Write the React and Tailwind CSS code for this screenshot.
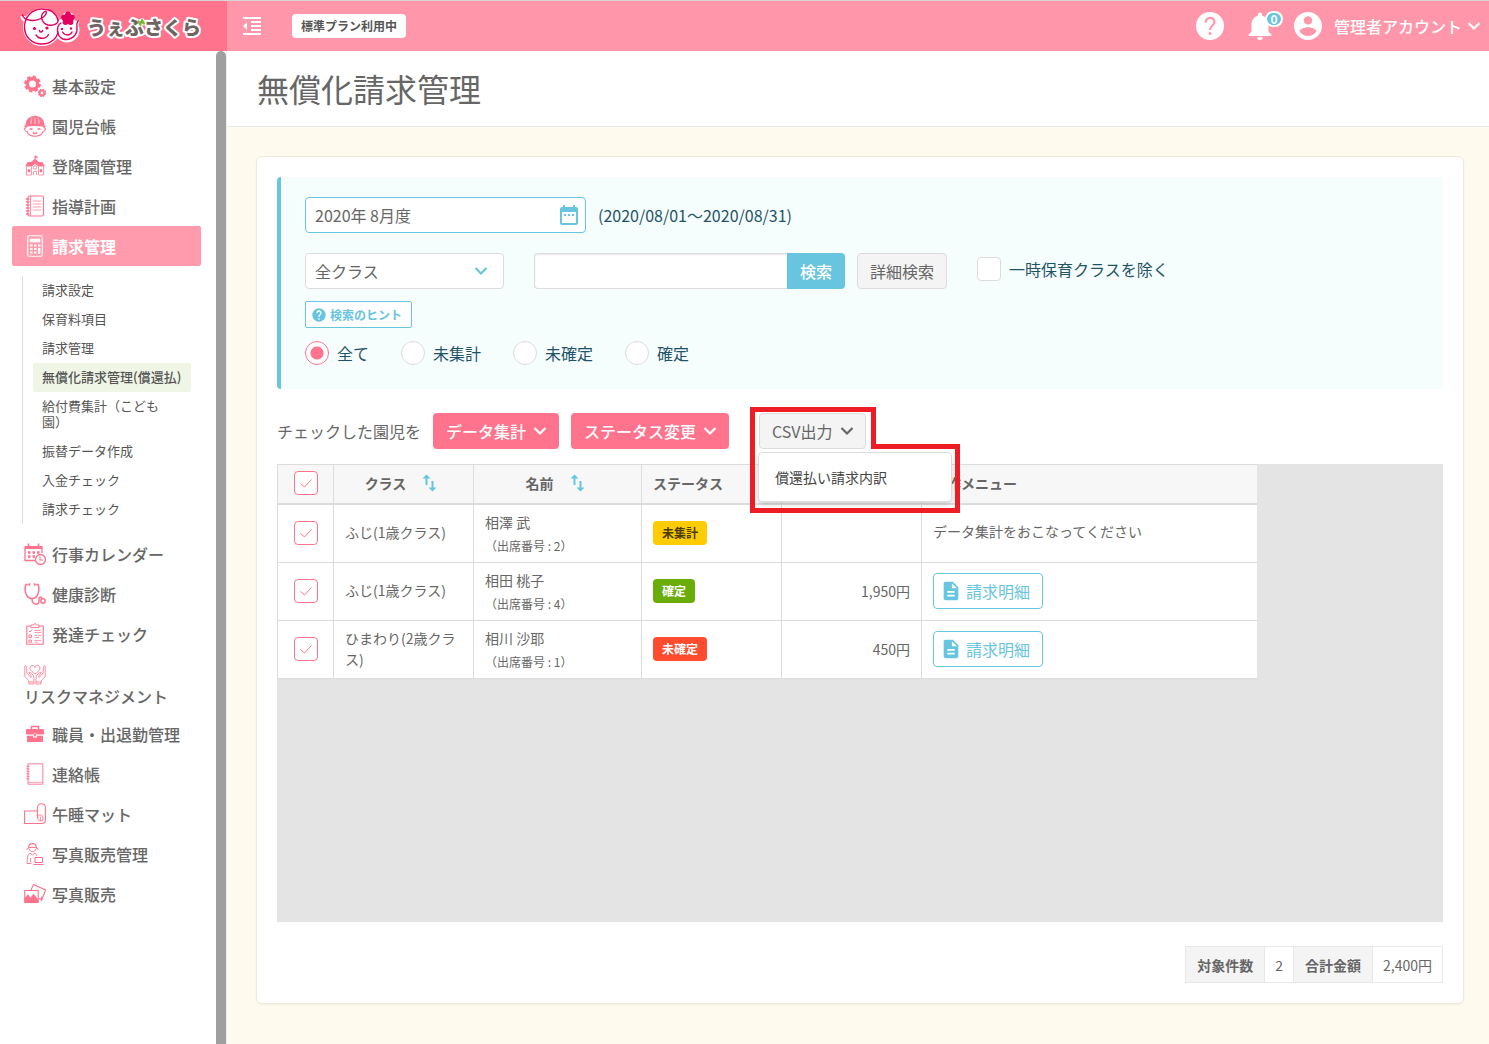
// App.jsx - 無償化請求管理
import React, { useState } from 'react';
import {
  MdDescription,
  MdFormatIndentDecrease,
  MdHelp,
  MdNotifications
} from 'react-icons/md';

const Chevron = ({ className = '' }) => (
  <svg className={`w-3.5 h-3.5 shrink-0 ${className}`} viewBox="0 0 14 14" fill="none" stroke="currentColor" strokeWidth="2.2" aria-hidden="true">
    <path d="M1.5 4 L7 9.5 L12.5 4" />
  </svg>
);

const icons = {
  gears: (
    <>
      <circle cx="8.5" cy="9" r="5.2" strokeWidth="3.4" />
      <circle cx="8.5" cy="9" r="7.2" strokeWidth="2.4" strokeDasharray="3.4 2.25" />
      <circle cx="18" cy="18" r="2.4" strokeWidth="2" />
      <circle cx="18" cy="18" r="3.6" strokeWidth="1.2" strokeDasharray="1.6 1.23" />
    </>
  ),
  child: (
    <>
      <path d="M2 10 C2 4.5 6 1.5 11 1.5 S20 4.5 20 10 Z" fill="currentColor" />
      <path d="M0.5 11.5 C6 9.5 16 9.5 21.5 11.5" strokeWidth="1.8" />
      <path d="M11 0.5 V2 M2.5 12.5 C-0.5 12.5 0.5 16.5 3 16.5 C5 22.8 17 22.8 19 16.5 C21.5 16.5 22.5 12.5 19.5 12.5" />
      <path d="M5.5 14 H8.5 M13.5 14 H16.5 M9 17.5 C10 19 12 19 13 17.5" strokeWidth="1.4" />
      <path d="M8 3 C7 5 7 7 7 9 M14 3 C15 5 15 7 15 9 M11 2.5 V9" stroke="#fff" strokeWidth="0.7" />
    </>
  ),
  school: (
    <>
      <path d="M2 11 L4 7.5 H7.5 L11 4.5 L14.5 7.5 H18 L20 11 H14.5 L11 8 L7.5 11 Z" fill="currentColor" />
      <path d="M11 5 V0.8 L13.5 2 L11 3" fill="currentColor" strokeWidth="0.9" />
      <path d="M2.5 11.5 V20 H7.5 M19.5 11.5 V20 H14.5 M7.5 11.5 V20 M14.5 11.5 V20 M9.5 20 V16.5 H12.5 V20" strokeWidth="0.7" />
      <circle cx="11" cy="12.5" r="1.7" strokeWidth="0.8" />
      <path d="M4 14.5 H6 V17 H4 Z M16 14.5 H18 V17 H16 Z" fill="currentColor" strokeWidth="0.5" />
    </>
  ),
  notebook: (
    <>
      <rect x="4" y="1" width="15.5" height="20" rx="1.5" />
      <path d="M6.5 1 V21" strokeWidth="0.8" />
      <path d="M2 4 H5.5 M2 7 H5.5 M2 10 H5.5 M2 13 H5.5 M2 16 H5.5 M2 19 H5.5" strokeWidth="1.4" />
      <path d="M9 6 H17 M9 9 H17 M9 12 H17 M9 15 H17" strokeWidth="0.7" />
    </>
  ),
  calculator: (
    <>
      <rect x="3.7" y="0.8" width="14.6" height="20.4" rx="1.5" />
      <path d="M6 4 H16 V7 H6 Z" fill="currentColor" strokeWidth="0.6" />
      <path d="M6 10.5 H8.5 M10 10.5 H12.5 M14 10.5 H16.5 M6 14 H8.5 M10 14 H12.5 M6 17.5 H8.5 M10 17.5 H12.5" strokeWidth="2.2" />
      <path d="M15.2 13 V18.6" strokeWidth="2.4" />
    </>
  ),
  calendar: (
    <>
      <path d="M11 17.5 H1 V4 H18 V10" strokeWidth="1.3" />
      <path d="M1 4.5 H18" strokeWidth="3" />
      <path d="M4.5 0.5 V4 M14.5 0.5 V4" strokeWidth="1.6" />
      <path d="M4 9.5 H6.5 M8.5 9.5 H11 M13 9.5 H15.5 M4 13.5 H6.5 M8.5 13.5 H11" strokeWidth="2.6" />
      <circle cx="16.5" cy="16.5" r="5" fill="#fff" strokeWidth="1.3" />
      <path d="M16 13.5 V17 H19" />
    </>
  ),
  stethoscope: (
    <>
      <path d="M4.5 1.5 H2 C0 6 1.5 15.5 8 15.5 S16 6 14 1.5 H11.5" strokeWidth="1.5" />
      <path d="M5.5 0.3 V2.7 M10.5 0.3 V2.7" strokeWidth="1.5" />
      <path d="M8 15.5 C8 23 15.5 22.5 15 17.5 C14.5 13.5 17.5 13 18 16" strokeWidth="1.5" />
      <circle cx="19" cy="18" r="2.2" strokeWidth="1.5" />
    </>
  ),
  clipboard: (
    <>
      <path d="M7 3 H2.8 V21.2 H19.2 V3 H15" />
      <path d="M7 4.5 V2 H9.5 C9.5 0.3 12.5 0.3 12.5 2 H15 V4.5 Z" strokeWidth="0.9" />
      <path d="M5 8 L6 9 L8 6.5 M5 12 H7.5 V14.5 H5 Z M5 17 H7.5 V19.2 H5 Z" strokeWidth="0.9" />
      <path d="M10.5 7.5 H17 M10.5 9.5 H17 M10.5 12.5 H13 M14 12.5 H17 M10.5 14.5 H15 M10.5 17.5 H17 M10.5 19.2 H14" strokeWidth="0.7" />
    </>
  ),
  hands: (
    <>
      <path d="M11 10 C6 6.5 5.5 4.5 6.5 2.5 C8 0.5 10.5 1.5 11 3.5 C11.5 1.5 14 0.5 15.5 2.5 C16.5 4.5 16 6.5 11 10 Z" strokeWidth="0.9" />
      <path d="M0.8 2 C2.5 1 2.8 3 2.8 9 L7 13.5 C8 12.5 6.5 11 4.8 8.5 C6.5 7.5 10 11.5 10 14 V20 H5 V17 L0.8 12.5 Z M4.5 18 H10" strokeWidth="0.8" />
      <path d="M21.2 2 C19.5 1 19.2 3 19.2 9 L15 13.5 C14 12.5 15.5 11 17.2 8.5 C15.5 7.5 12 11.5 12 14 V20 H17 V17 L21.2 12.5 Z M12 18 H17.5" strokeWidth="0.8" />
    </>
  ),
  briefcase: (
    <>
      <path d="M7.5 6 V3.5 H14.5 V6" strokeWidth="1.6" />
      <rect x="2" y="6" width="18" height="5.5" rx="1.2" fill="currentColor" stroke="none" />
      <path d="M3 12.8 H9 V14.5 H13 V12.8 H19 V19 H3 Z" fill="currentColor" stroke="none" />
      <rect x="9.8" y="10.8" width="2.4" height="2.6" fill="currentColor" stroke="#fff" strokeWidth="0.5" />
    </>
  ),
  ringNote: (
    <>
      <path d="M4 0.8 H18.8 V21.2 H4 Z" strokeWidth="0.9" />
      <path d="M4 19.3 H18.8" strokeWidth="0.7" />
      <path d="M2.5 3 L5.5 3.8 M2.5 5.5 L5.5 6.3 M2.5 8 L5.5 8.8 M2.5 10.5 L5.5 11.3 M2.5 13 L5.5 13.8 M2.5 15.5 L5.5 16.3" />
    </>
  ),
  mat: (
    <>
      <path d="M13.5 8 H0.6 V20.5 H18" />
      <path d="M13.5 15 V4.5 C13.5 -0.5 21.4 -0.5 21.4 4.5 V17 C21.4 19.5 20 20.5 18 20.5" />
      <path d="M13.5 15 C13.5 10.8 18.8 11 18.8 14.5 V17.5 C17 18.5 13.5 17.5 13.5 15 Z M16.3 13.5 V17.8" strokeWidth="0.9" />
    </>
  ),
  photographer: (
    <>
      <path d="M4.5 5.5 C4.5 -1 12.5 -1 12.5 5.5 M2.5 6.5 C5 3.5 12 3.5 14.5 6.5" />
      <path d="M5.5 6 C5.5 9.5 11.5 9.5 11.5 6" strokeWidth="0.9" />
      <path d="M7.5 20.5 H3 C3.5 15 3.5 11.5 6 10 L8.5 12 L11 10 C12.5 11 12.5 12 13 13 M6.5 19 V15" strokeWidth="0.9" />
      <path d="M11 14.5 H18.5 V19.5 H11 Z M9.5 21.5 H19.5" strokeWidth="1" />
    </>
  ),
  photos: (
    <>
      <path d="M7 7 L9.5 1.5 L21.5 7 L18 16.5 L14.5 15.5" />
      <rect x="0.7" y="7.5" width="13.5" height="12" />
      <path d="M1 19 V15 L4 11.5 L6.5 15 L9.5 11 L14 16.5 V19 Z" fill="currentColor" strokeWidth="0.5" />
      <path d="M17.5 13.5 V18" />
    </>
  )
};

const NavIcon = ({ name }) => (
  <svg className="w-[22px] h-[22px] shrink-0" viewBox="0 0 22 22" fill="none" stroke="currentColor" strokeWidth="1.1" aria-hidden="true">
    {icons[name]}
  </svg>
);

const navTop = [
  { icon: 'gears', label: '基本設定' },
  { icon: 'child', label: '園児台帳' },
  { icon: 'school', label: '登降園管理' },
  { icon: 'notebook', label: '指導計画' },
  { icon: 'calculator', label: '請求管理', active: true }
];

const navSub = [
  { label: '請求設定' },
  { label: '保育料項目' },
  { label: '請求管理' },
  { label: '無償化請求管理(償還払)', active: true },
  { label: '給付費集計（こども園）' },
  { label: '振替データ作成' },
  { label: '入金チェック' },
  { label: '請求チェック' }
];

const navBottom = [
  { icon: 'calendar', label: '行事カレンダー' },
  { icon: 'stethoscope', label: '健康診断' },
  { icon: 'clipboard', label: '発達チェック' },
  { icon: 'hands', label: 'リスクマネジメント', stacked: true },
  { icon: 'briefcase', label: '職員・出退勤管理' },
  { icon: 'ringNote', label: '連絡帳' },
  { icon: 'mat', label: '午睡マット' },
  { icon: 'photographer', label: '写真販売管理' },
  { icon: 'photos', label: '写真販売' }
];

const rows = [
  { id: 1, className: 'ふじ(1歳クラス)', name: '相澤 武', no: 2, status: '未集計', amount: '' },
  { id: 2, className: 'ふじ(1歳クラス)', name: '相田 桃子', no: 4, status: '確定', amount: '1,950円' },
  { id: 3, className: 'ひまわり(2歳クラス)', name: '相川 沙耶', no: 1, status: '未確定', amount: '450円' }
];

const statusStyles = {
  未集計: 'bg-[#ffcc00] text-[#4a3c00]',
  確定: 'bg-[#6aad0b] text-white',
  未確定: 'bg-[#ff4b2e] text-white'
};

const NavItem = ({ item }) => {
  if (item.stacked) {
    return (
      <a href="#" className="flex flex-col px-3 pt-2.5 h-[60px] text-[#ff738c]">
        <NavIcon name={item.icon} />
        <span className="leading-5 font-medium text-[#666]">{item.label}</span>
      </a>
    );
  }
  return (
    <a
      href="#"
      className={`flex items-center gap-1.5 h-10 px-3 rounded-xs ${item.active ? 'bg-[#ff9bad] text-white' : 'text-[#ff738c]'}`}
    >
      <NavIcon name={item.icon} />
      <span className={item.active ? 'font-bold' : 'font-medium text-[#666]'}>{item.label}</span>
    </a>
  );
};

const Logo = () => (
  <svg className="w-[190px] h-[46px]" viewBox="0 0 190 46" role="img" aria-label="うぇぶさくら">
    <g stroke="#fff" strokeWidth="5" fill="#fff" strokeLinejoin="round">
      <circle cx="22" cy="24" r="16.5" />
      <circle cx="47" cy="27" r="10" />
      <path d="M3 13 C3 17 8 19 14 17" />
      <circle cx="48" cy="16" r="4.5" />
      <path d="M57 18 L55 24" />
    </g>
    <g stroke="#e5005f" strokeWidth="1.4" fill="none" strokeLinecap="round">
      <path d="M38 17 C36 10 30 6 22 6 C12 6 4.5 14 4.5 24 C4.5 34 12 41 22 41 C31 41 37 35 38 29" />
      <path d="M2.5 12 C4 18 15 19 22 15 C28 11 27 7 24 9 C20 12 21 20 28 22 C35 23 39 20 38 16" />
      <path d="M41 20 C36 23 36 33 43 36 C50 38 57 33 57 26 C57 22 56 21 58 18" />
      <path d="M16 32 C19 36.5 26 36.5 28.5 31.5 M19.5 27.5 C19.5 29.5 22.5 29.5 22.5 27.5" />
      <path d="M42.5 29 C45 33 50 33 52 29" />
    </g>
    <g fill="#e5005f">
      <circle cx="14.5" cy="25.5" r="1.6" />
      <circle cx="27" cy="25" r="1.6" />
      <circle cx="42" cy="26" r="1.2" />
      <circle cx="51" cy="25.5" r="1.2" />
      <circle cx="48" cy="11.5" r="2.9" />
      <circle cx="52" cy="14.5" r="2.9" />
      <circle cx="50.5" cy="19" r="2.9" />
      <circle cx="45.5" cy="19" r="2.9" />
      <circle cx="44" cy="14.5" r="2.9" />
      <circle cx="48" cy="16" r="2.5" />
    </g>
    <text
      x="67"
      y="32"
      fontSize="19"
      fontWeight="900"
      fill="#6f6462"
      stroke="#fff"
      strokeWidth="4"
      strokeLinejoin="round"
      paintOrder="stroke"
    >
      うぇぶさくら
    </text>
    <path d="M118.5 18.5 L120.5 22 M122 17 L124 20.5" stroke="#7cc623" strokeWidth="2.2" strokeLinecap="round" />
  </svg>
);

const Header = () => (
  <header className="flex h-[51px] border-t border-[#d9d3d5] bg-[#ff96a9] text-white">
    <a href="#" className="flex items-center w-[227px] shrink-0 pl-5 bg-[#ff738c]">
      <Logo />
    </a>
    <div className="flex flex-1 items-center pl-[13px] pr-2">
      <button type="button" aria-label="メニューを閉じる">
        <MdFormatIndentDecrease size={24} />
      </button>
      <span className="ml-7 px-[9px] h-6 leading-6 rounded-sm bg-white text-xs font-bold text-[#555]">
        標準プラン利用中
      </span>
      <div className="flex items-center ml-auto">
        <button type="button" aria-label="ヘルプ">
          <svg className="w-7 h-7" viewBox="0 0 28 28" aria-hidden="true">
            <circle cx="14" cy="14" r="14" fill="#fff" />
            <path d="M9.7 10.5 C9.7 4.5 18.5 4.5 18.5 10 C18.5 13.5 14 13.7 14 18" fill="none" stroke="#ff96a9" strokeWidth="2.2" />
            <circle cx="14" cy="21.5" r="1.5" fill="#ff96a9" />
          </svg>
        </button>
        <button type="button" aria-label="お知らせ" className="relative ml-[19px]">
          <MdNotifications size={34} />
          <span className="absolute -right-1.5 top-0.5 w-[18px] h-4 rounded-full border-2 border-white bg-[#68c5df] text-xs leading-3 font-bold">
            0
          </span>
        </button>
        <button type="button" className="flex items-center ml-[17px]">
          <svg className="w-7 h-7" viewBox="2 2 20 20" fill="currentColor" aria-hidden="true">
            <path d="M12 2C6.48 2 2 6.48 2 12s4.48 10 10 10 10-4.48 10-10S17.52 2 12 2zm0 3c1.66 0 3 1.34 3 3s-1.34 3-3 3-3-1.34-3-3 1.34-3 3-3zm0 14.2c-2.5 0-4.71-1.28-6-3.22.03-1.99 4-3.08 6-3.08 1.99 0 5.97 1.09 6 3.08-1.29 1.94-3.5 3.22-6 3.22z" />
          </svg>
          <span className="ml-3 mr-[5px] font-medium">管理者アカウント</span>
          <Chevron />
        </button>
      </div>
    </div>
  </header>
);

const Sidebar = () => (
  <aside className="flex w-[227px] shrink-0 border-r border-[#eee] bg-white">
    <nav className="flex-1 min-w-0 pl-3 pr-[15px] pt-[15px] pb-8">
      {navTop.map(item => <NavItem key={item.label} item={item} />)}
      <ul className="my-2.5 ml-2.5 pl-2.5 pr-2.5 border-l border-[#ddd]">
        {navSub.map(item => (
          <li key={item.label}>
            <a
              href="#"
              className={`block pl-[9px] pt-1.5 pb-[7px] text-[13px] leading-4 rounded-xs text-[#555] ${item.active ? 'pr-2 bg-[#eff6e6] font-medium' : 'pr-5'}`}
            >
              {item.label}
            </a>
          </li>
        ))}
      </ul>
      {navBottom.map(item => <NavItem key={item.label} item={item} />)}
    </nav>
    <div className="w-2.5 shrink-0 rounded-t-full bg-[#9f9f9f]" />
  </aside>
);

const RadioItem = ({ label, value, current, onChange }) => (
  <label className="flex items-center gap-2">
    <input
      type="radio"
      name="status"
      value={value}
      checked={current === value}
      onChange={() => onChange(value)}
      className="appearance-none w-6 h-6 rounded-full border border-[#dcdcdc] bg-white checked:border-[#ff738c] checked:bg-[radial-gradient(circle,#ff738c_6px,#fff_7px)]"
    />
    {label}
  </label>
);

const PinkCheckbox = ({ label, checked, onChange }) => (
  <label className="inline-grid align-middle place-items-center">
    <input
      type="checkbox"
      aria-label={label}
      checked={checked}
      onChange={onChange}
      className="appearance-none col-start-1 row-start-1 w-6 h-6 rounded-sm border border-[#ff738c] bg-white"
    />
    {checked && (
      <svg className="col-start-1 row-start-1 w-3 h-3 pointer-events-none" viewBox="0 0 12 12" fill="none" stroke="#ff738c" aria-hidden="true">
        <path d="M0.5 6.5 L4.5 10 L11.5 2.5" />
      </svg>
    )}
  </label>
);

const SortIcon = () => (
  <svg className="w-4 h-[18px]" viewBox="0 0 16 18" fill="none" stroke="#68c5df" strokeWidth="2" aria-hidden="true">
    <path d="M4.5 11 V3 M10.5 7 V15" />
    <path d="M0.5 4.5 L4.5 0.5 L8.5 4.5 Z M6.5 13.5 L10.5 17.5 L14.5 13.5 Z" fill="#68c5df" stroke="none" />
  </svg>
);

const FilterPanel = () => {
  const [status, setStatus] = useState('all');

  return (
    <form className="rounded-sm border-l-4 border-[#68c5df] bg-[#f6fdfd] px-6 pt-5 pb-6 text-[#1f5466]">
      <div className="flex items-center gap-3">
        <div className="grid w-[281px] items-center">
          <input
            type="text"
            aria-label="対象年月"
            defaultValue="2020年 8月度"
            className="col-start-1 row-start-1 w-full h-9 px-[9px] rounded-sm border border-[#68c5df] bg-white text-[#666]"
          />
          <svg className="col-start-1 row-start-1 justify-self-end mr-2 w-[18px] h-5 pointer-events-none" viewBox="0 0 18 20" fill="#68c5df" aria-hidden="true">
            <path d="M2 2 H3 V0 H5 V2 H13 V0 H15 V2 H16 Q18 2 18 4 V18 Q18 20 16 20 H2 Q0 20 0 18 V4 Q0 2 2 2 Z M2 7 V18 H16 V7 Z" fillRule="evenodd" />
            <path d="M4 9 H6 V11 H4 Z M8 9 H10 V11 H8 Z M12 9 H14 V11 H12 Z" />
          </svg>
        </div>
        <span>(2020/08/01～2020/08/31)</span>
      </div>

      <div className="flex mt-5">
        <div className="grid w-[199px] items-center">
          <select aria-label="クラス" className="col-start-1 row-start-1 appearance-none w-full h-9 px-[9px] rounded-sm border border-[#dcdcdc] bg-white text-[#666]">
            <option>全クラス</option>
          </select>
          <Chevron className="col-start-1 row-start-1 justify-self-end mr-4 text-[#68c5df] pointer-events-none" />
        </div>
        <input
          type="search"
          aria-label="キーワード"
          className="w-[253px] h-9 ml-[30px] px-2 rounded-l-sm border border-r-0 border-[#dcdcdc] bg-white shadow-[inset_0_1px_2px_rgba(0,0,0,0.1)]"
        />
        <button type="button" className="w-[58px] h-9 rounded-r-sm bg-[#68c5df] font-medium text-white">検索</button>
        <button type="button" className="w-[90px] h-9 ml-3 rounded-sm border border-[#dcdcdc] bg-[#f4f4f4] text-[#666]">詳細検索</button>
        <label className="flex items-center gap-2 h-8 ml-[30px]">
          <input type="checkbox" className="appearance-none w-6 h-6 rounded-sm border border-[#dcdcdc] bg-white checked:bg-[#ff738c]" />
          一時保育クラスを除く
        </label>
      </div>

      <button type="button" className="flex items-center gap-[3px] h-[27px] mt-3 pl-[5px] pr-[9px] rounded-[2px] border border-[#68c5df] bg-white text-xs font-bold text-[#68c5df]">
        <MdHelp size={16} />
        検索のヒント
      </button>

      <div className="flex gap-8 mt-[13px]">
        <RadioItem label="全て" value="all" current={status} onChange={setStatus} />
        <RadioItem label="未集計" value="none" current={status} onChange={setStatus} />
        <RadioItem label="未確定" value="pending" current={status} onChange={setStatus} />
        <RadioItem label="確定" value="fixed" current={status} onChange={setStatus} />
      </div>
    </form>
  );
};

const ActionBar = () => (
  <div className="flex items-center gap-3 mt-6">
    <span>チェックした園児を</span>
    <button type="button" className="flex items-center gap-[7px] h-9 pl-[13px] pr-3 rounded-sm bg-[#ff738c] font-medium text-white">
      データ集計
      <Chevron />
    </button>
    <button type="button" className="flex items-center gap-[7px] h-9 pl-[13px] pr-3 rounded-sm bg-[#ff738c] font-medium text-white">
      ステータス変更
      <Chevron />
    </button>
    <div className="relative ml-[18px]">
      <button type="button" className="flex items-center gap-[7px] h-9 pl-3 pr-[11px] rounded-sm border border-[#dcdcdc] bg-[#f4f4f4]">
        CSV出力
        <Chevron />
      </button>
      <div className="absolute z-10 -left-px top-[39px] w-[194px] py-2 rounded-sm border border-[#dcdcdc] bg-white shadow-md">
        <a href="#" className="block px-4 text-sm leading-8 text-[#444]">償還払い請求内訳</a>
      </div>
      {/* 強調枠 */}
      <svg className="absolute z-20 -left-[9px] -top-1.5 w-[210px] h-[106px] max-w-none pointer-events-none" viewBox="0 0 210 106" fill="none" stroke="#ee1c25" strokeWidth="5" aria-hidden="true">
        <path d="M2.5 2.5 H123.5 V39.5 H207.5 V103.5 H2.5 Z" />
      </svg>
    </div>
  </div>
);

const ClaimTable = () => {
  const [checkedIds, setCheckedIds] = useState(rows.map(row => row.id));
  const allChecked = checkedIds.length === rows.length;

  const toggle = (id) => {
    setCheckedIds(prev => (prev.includes(id) ? prev.filter(v => v !== id) : [...prev, id]));
  };

  const th = 'h-[41px] px-[11px] pb-0.5 border-l border-t border-b-2 border-[#dcdcdc] bg-[#f7f7f7] font-bold';
  const td = 'h-[58px] px-[11px] border-l border-b border-[#dcdcdc] bg-white';

  return (
    <div className="mt-[15px] min-h-[458px] bg-[#e4e4e4]">
      <table className="w-[980px] table-fixed border-separate border-spacing-0 text-sm">
        <colgroup>
          <col className="w-[56px]" />
          <col className="w-[140px]" />
          <col className="w-[168px]" />
          <col className="w-[140px]" />
          <col className="w-[140px]" />
          <col />
        </colgroup>
        <thead>
          <tr>
            <th className={`${th} text-center`}>
              <PinkCheckbox
                label="すべて選択"
                checked={allChecked}
                onChange={() => setCheckedIds(allChecked ? [] : rows.map(row => row.id))}
              />
            </th>
            <th className={th}>
              <span className="flex items-center justify-center gap-4 pr-1">クラス<SortIcon /></span>
            </th>
            <th className={th}>
              <span className="flex items-center justify-center gap-4 pr-1">名前<SortIcon /></span>
            </th>
            <th className={`${th} text-left`}>ステータス</th>
            <th className={th} aria-label="金額" />
            <th className={`${th} text-left`}>操作メニュー</th>
          </tr>
        </thead>
        <tbody>
          {rows.map(row => (
            <tr key={row.id}>
              <td className={`${td} pb-0.5 text-center`}>
                <PinkCheckbox
                  label={`${row.name}を選択`}
                  checked={checkedIds.includes(row.id)}
                  onChange={() => toggle(row.id)}
                />
              </td>
              <td className={`${td} pb-0.5 leading-[21px]`}>{row.className}</td>
              <td className={`${td} leading-6`}>
                {row.name}
                <span className="block text-xs leading-6">（出席番号 : {row.no}）</span>
              </td>
              <td className={`${td} pb-0.5`}>
                <span className={`inline-block h-6 px-[9px] rounded-sm align-middle text-xs leading-6 font-bold ${statusStyles[row.status]}`}>
                  {row.status}
                </span>
              </td>
              <td className={`${td} pb-0.5 text-right`}>{row.amount}</td>
              <td className={`${td} pb-0.5`}>
                {row.amount ? (
                  <button type="button" className="flex items-center gap-1 h-9 pl-1.5 pr-3 rounded-sm border border-[#68c5df] bg-white text-base text-[#68c5df]">
                    <MdDescription size={22} />
                    請求明細
                  </button>
                ) : (
                  <p className="pb-1">データ集計をおこなってください</p>
                )}
              </td>
            </tr>
          ))}
        </tbody>
      </table>
    </div>
  );
};

const Summary = () => (
  <table className="mt-6 ml-auto border-collapse text-sm">
    <tbody>
      <tr>
        <th scope="row" className="h-9 px-[11px] border border-[#e8e8e8] bg-[#f4f4f4] font-bold">対象件数</th>
        <td className="px-2.5 border border-[#e8e8e8]">2</td>
        <th scope="row" className="px-[11px] border border-[#e8e8e8] bg-[#f4f4f4] font-bold">合計金額</th>
        <td className="px-2.5 border border-[#e8e8e8]">2,400円</td>
      </tr>
    </tbody>
  </table>
);

export default function App() {
  return (
    <div className="flex flex-col min-h-screen font-['Noto_Sans_CJK_JP',sans-serif] text-base text-[#666]">
      <Header />
      <div className="flex flex-1">
        <Sidebar />
        <main className="flex-1 min-w-0 bg-[#fffaee]">
          <div className="flex items-center h-[76px] pl-[30px] pb-0.5 border-b border-[#eaeaea] bg-white">
            <h1 className="text-[32px] leading-10">無償化請求管理</h1>
          </div>
          <div className="pl-[29px] pr-[25px] pt-[29px] pb-10">
            <section className="p-5 rounded-md border border-[#f0ebe0] bg-white shadow-xs">
              <FilterPanel />
              <ActionBar />
              <ClaimTable />
              <Summary />
            </section>
          </div>
        </main>
      </div>
    </div>
  );
}
